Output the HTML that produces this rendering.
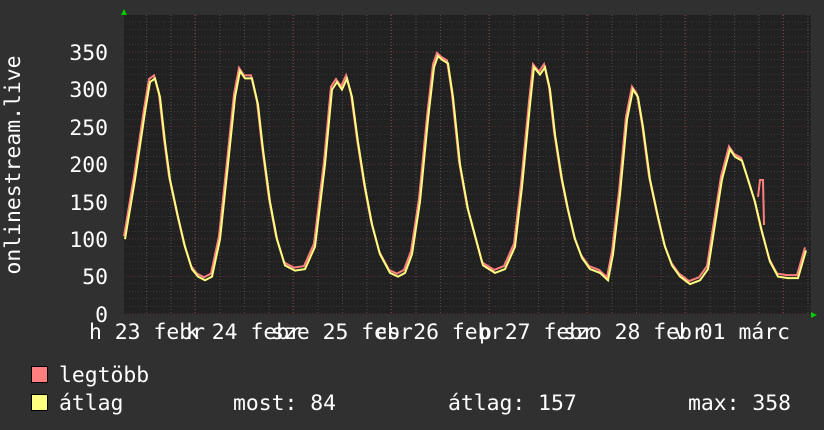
<!DOCTYPE html>
<html><head><meta charset="utf-8"><style>
body{margin:0;background:#303030;}
svg{display:block}
text{font-family:"DejaVu Sans Mono","Liberation Mono",monospace;fill:#fff;font-size:21.4px}
</style></head><body>
<svg width="824" height="430" xmlns="http://www.w3.org/2000/svg">
<defs>
<pattern id="hmin" patternUnits="userSpaceOnUse" x="0" y="313.5" width="824" height="7.48"><line x1="0" y1="0" x2="824" y2="0" stroke="#4e4e4e" stroke-dasharray="1,2"/></pattern>
<pattern id="hmaj" patternUnits="userSpaceOnUse" x="0" y="313.5" width="824" height="37.4"><line x1="0" y1="0" x2="824" y2="0" stroke="#7a3838" stroke-dasharray="1,2"/></pattern>
<pattern id="vmin" patternUnits="userSpaceOnUse" x="146" y="0" width="24.5" height="430"><line x1="0.5" y1="0" x2="0.5" y2="430" stroke="#4e4e4e" stroke-dasharray="1,2"/></pattern>
<pattern id="vmaj" patternUnits="userSpaceOnUse" x="194.5" y="0" width="98" height="430"><line x1="0.5" y1="0" x2="0.5" y2="430" stroke="#7a3838" stroke-dasharray="1,2"/></pattern>
<polyline id="d" fill="none" stroke-width="2" points="125,239.2 135,179.4 145,112 150,82.1 155,78.4 160,97.1 165,142 170,179.4 178,216.8 185,246.7 192,269.1 198,276.6 205,280.3 212,276.6 220,239.2 228,164.4 235,97.1 240,70.9 245,78.4 252,78.4 258,104.6 263,149.4 270,201.8 277,239.2 285,265.4 295,270.6 305,269.1 315,246.7 325,164.4 332,89.6 337,82.1 342,89.6 347,78.4 352,97.1 358,142 365,186.8 372,224.2 380,254.2 390,272.9 398,276.6 405,272.9 412,254.2 420,201.8 428,119.5 434,67.2 438,55.9 442,59.7 448,63.4 453,97.1 460,164.4 468,209.3 476,239.2 483,265.4 495,272.9 505,269.1 515,246.7 522,186.8 530,104.6 534,67.2 540,74.6 545,67.2 550,89.6 555,134.5 562,179.4 568,209.3 575,239.2 582,257.9 590,269.1 600,272.9 608,280.3 613,254.2 620,194.3 627,119.5 633,89.6 638,97.1 643,127 650,179.4 658,216.8 665,246.7 672,265.4 680,276.6 690,284.1 700,280.3 708,269.1 715,224.2 722,179.4 730,149.4 735,156.9 742,160.7 748,179.4 755,201.8 762,231.7 770,261.6 778,276.6 788,278.1 798,278.1 806,250.4"/>
</defs>
<rect width="824" height="430" fill="#303030"/>
<rect x="124" y="15" width="687" height="299" fill="#212121"/>
<rect x="124" y="15" width="687" height="299" fill="url(#hmin)"/>
<rect x="124" y="15" width="687" height="299" fill="url(#vmin)"/>
<rect x="124" y="15" width="687" height="299" fill="url(#hmaj)"/>
<rect x="124" y="15" width="687" height="299" fill="url(#vmaj)"/>
<g stroke="#ff7f7f"><use href="#d" transform="translate(-1,-3)"/></g>
<polyline points="758,197 760,180 763,180 764,225" fill="none" stroke="#ff7f7f" stroke-width="2"/>
<g stroke="#ffff7f"><use href="#d"/></g>
<polygon points="121,15 127,15 124,9" fill="#00cc00"/>
<polygon points="811,312 811,318 817,315" fill="#00cc00"/>
<g text-anchor="end">
<text x="108" y="60">350</text><text x="108" y="97">300</text><text x="108" y="135">250</text>
<text x="108" y="172">200</text><text x="108" y="210">150</text><text x="108" y="247">100</text>
<text x="108" y="284">50</text><text x="108" y="322">0</text>
</g>
<text transform="translate(20,165) rotate(-90)" text-anchor="middle">onlinestream.live</text>
<g text-anchor="middle">
<text x="147" y="339">h 23 febr</text><text x="244" y="339">k 24 febr</text>
<text x="342" y="339">sze 25 febr</text><text x="439" y="339">cs 26 febr</text>
<text x="537" y="339">p 27 febr</text><text x="634" y="339">szo 28 febr</text>
<text x="732" y="339">v 01 márc</text>
</g>
<rect x="31.5" y="366.5" width="16" height="16" fill="#ff7f7f" stroke="#000"/>
<rect x="31.5" y="394.5" width="16" height="16" fill="#ffff7f" stroke="#000"/>
<text x="59" y="382">legtöbb</text>
<text x="59" y="410">átlag</text>
<text x="233" y="410">most: 84</text>
<text x="448" y="410">átlag: 157</text>
<text x="688" y="410">max: 358</text>
</svg>
</body></html>
